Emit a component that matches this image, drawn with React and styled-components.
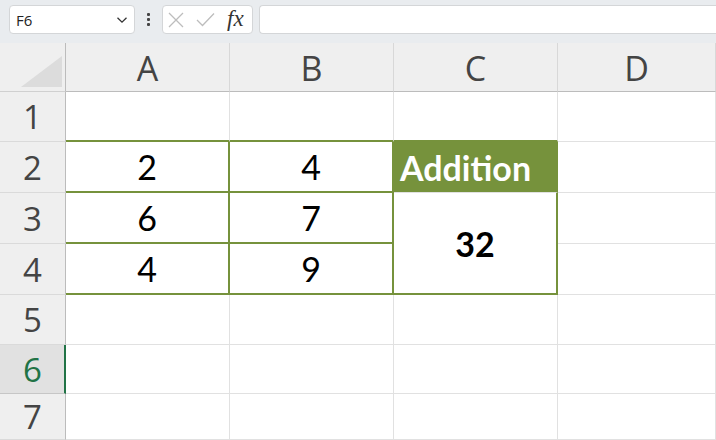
import React from 'react'
import styled, { createGlobalStyle } from "styled-components";

const GREEN = '#76923c';
const GRID = '#e1e1e1';
const HEAD_LINE = '#bcbcbc';

const GlobalStyle = createGlobalStyle`
    html, body {
        margin: 0;
        padding: 0;
        background: #ffffff;
        overflow: hidden;
    }
    #root {
        width: 716px;
        height: 440px;
    }
`;

const Page = styled.div`
    width: 716px;
    height: 440px;
    display: flex;
    flex-direction: column;
    overflow: hidden;
    font-family: "Open Sans", "Noto Sans", sans-serif;
`;

const Toolbar = styled.div`
    height: 43px;
    flex: none;
    background: #e9ecef;
    display: flex;
    align-items: flex-start;
    padding: 5px 0 0 9px;
    box-sizing: border-box;
`;

const Box = styled.div`
    height: 29px;
    width: ${props => props.$width};
    flex: ${props => props.$grow ? '1' : 'none'};
    background: #ffffff;
    border: 1px solid #d4d6d8;
    border-right-width: ${props => props.$grow ? '0' : '1px'};
    border-radius: ${props => props.$grow ? '4px 0 0 4px' : '4px'};
    box-sizing: border-box;
    display: flex;
    align-items: center;
`;

const NameText = styled.span`
    flex: 1;
    padding-left: 6px;
    font-size: 15px;
    color: #222222;
    font-family: "Open Sans", sans-serif;
`;

const Chevron = styled.svg`
    width: 12px;
    height: 8px;
    margin-right: 6px;
`;

const Dots = styled.div`
    width: 27px;
    height: 29px;
    display: flex;
    flex-direction: column;
    align-items: center;
    justify-content: center;
    gap: 2px;

    span {
        width: 3px;
        height: 3px;
        background: #444444;
        border-radius: 1px;
    }
`;

const IconRow = styled.div`
    display: flex;
    align-items: center;
    width: 100%;
    padding-left: 5px;
    gap: 12px;
`;

const Fx = styled.span`
    font-family: "Liberation Serif", "DejaVu Serif", serif;
    font-style: italic;
    font-size: 23px;
    color: #333333;
    line-height: 1;
    margin-top: -3px;
`;

const Sheet = styled.div`
    flex: 1;
    display: grid;
    grid-template-columns: 66px 164px 164px 164px 1fr;
    grid-template-rows: 49px 50px 51px 51px 51px 50px 49px 1fr;
`;

const Corner = styled.div`
    background: #efefef;
    border-right: 1px solid ${HEAD_LINE};
    border-bottom: 1px solid #d0d0d0;
    box-sizing: border-box;
    display: flex;
    align-items: flex-end;
    justify-content: flex-end;
    padding: 0 3px 4px 0;

    svg {
        width: 41px;
        height: 31px;
    }
`;

const ColHead = styled.div`
    background: #efefef;
    border-right: 1px solid #d8d8d8;
    border-bottom: 1px solid ${HEAD_LINE};
    box-sizing: border-box;
    display: flex;
    align-items: center;
    justify-content: center;
    font-size: 34px;
    color: #444444;
    padding-top: 1px;
`;

const RowHead = styled.div`
    background: ${props => props.$active ? '#e1e1e1' : '#efefef'};
    border-right: ${props => props.$active ? `2px solid #217346` : `1px solid ${HEAD_LINE}`};
    border-bottom: 1px solid ${props => props.$active ? '#c6c6c6' : '#dadada'};
    box-sizing: border-box;
    display: flex;
    align-items: center;
    justify-content: center;
    font-size: 33px;
    color: ${props => props.$active ? '#217346' : '#444444'};
    padding-left: ${props => props.$active ? '1px' : '0'};
`;

const Cell = styled.div`
    background: ${props => props.$fill || '#ffffff'};
    border-right: ${props => props.$gr ? `2px solid ${GREEN}` : `1px solid ${GRID}`};
    border-bottom: ${props => props.$gb ? `2px solid ${GREEN}` : `1px solid ${GRID}`};
    grid-row: ${props => props.$span ? `span ${props.$span}` : 'auto'};
    box-sizing: border-box;
    display: flex;
    align-items: center;
    justify-content: center;
    font-family: "Lato", "Carlito", sans-serif;
    font-size: 34px;
    font-weight: ${props => props.$bold ? 700 : 400};
    color: ${props => props.$color || '#000000'};
    ${props => props.$left && 'justify-content: flex-start; padding-left: 6px;'}
`;

const columns = ['A', 'B', 'C', 'D'];

function FormulaBar() {
    return (
        <Toolbar>
            <Box $width="126px">
                <NameText>F6</NameText>
                <Chevron viewBox="0 0 12 8">
                    <path d="M1.5 1.8 L6 6.2 L10.5 1.8" fill="none" stroke="#333" strokeWidth="1.3" />
                </Chevron>
            </Box>
            <Dots><span /><span /><span /></Dots>
            <Box $width="91px">
                <IconRow>
                    <svg width="16" height="16" viewBox="0 0 16 16">
                        <path d="M1 1 L15 15 M15 1 L1 15" stroke="#bdbdbd" strokeWidth="1.3" />
                    </svg>
                    <svg width="19" height="15" viewBox="0 0 19 15">
                        <path d="M1 8 L6.5 13.5 L18 1.5" fill="none" stroke="#bdbdbd" strokeWidth="1.3" />
                    </svg>
                    <Fx>fx</Fx>
                </IconRow>
            </Box>
            <Box $grow style={{ marginLeft: '6px' }} />
        </Toolbar>
    )
}

function App() {
    return (
        <Page>
            <GlobalStyle />
            <FormulaBar />
            <Sheet>
                <Corner>
                    <svg viewBox="0 0 41 31">
                        <polygon points="41,0 41,31 0,31" fill="#dcdcdc" />
                    </svg>
                </Corner>
                {columns.map(c => <ColHead key={c}>{c}</ColHead>)}

                <RowHead>1</RowHead>
                <Cell $gb />
                <Cell $gb />
                <Cell $gb />
                <Cell />

                <RowHead>2</RowHead>
                <Cell $gr $gb>2</Cell>
                <Cell $gr $gb>4</Cell>
                <Cell $gr $fill={GREEN} $color="#ffffff" $bold $left>Addition</Cell>
                <Cell />

                <RowHead>3</RowHead>
                <Cell $gr $gb>6</Cell>
                <Cell $gr $gb>7</Cell>
                <Cell $gr $gb $bold $span={2}>32</Cell>
                <Cell />

                <RowHead>4</RowHead>
                <Cell $gr $gb>4</Cell>
                <Cell $gr $gb>9</Cell>
                <Cell />

                {[5, 6, 7].map(r => (
                    <React.Fragment key={r}>
                        <RowHead $active={r === 6}>{r}</RowHead>
                        {columns.map(c => <Cell key={c} />)}
                    </React.Fragment>
                ))}
            </Sheet>
        </Page>
    )
}

export default App
